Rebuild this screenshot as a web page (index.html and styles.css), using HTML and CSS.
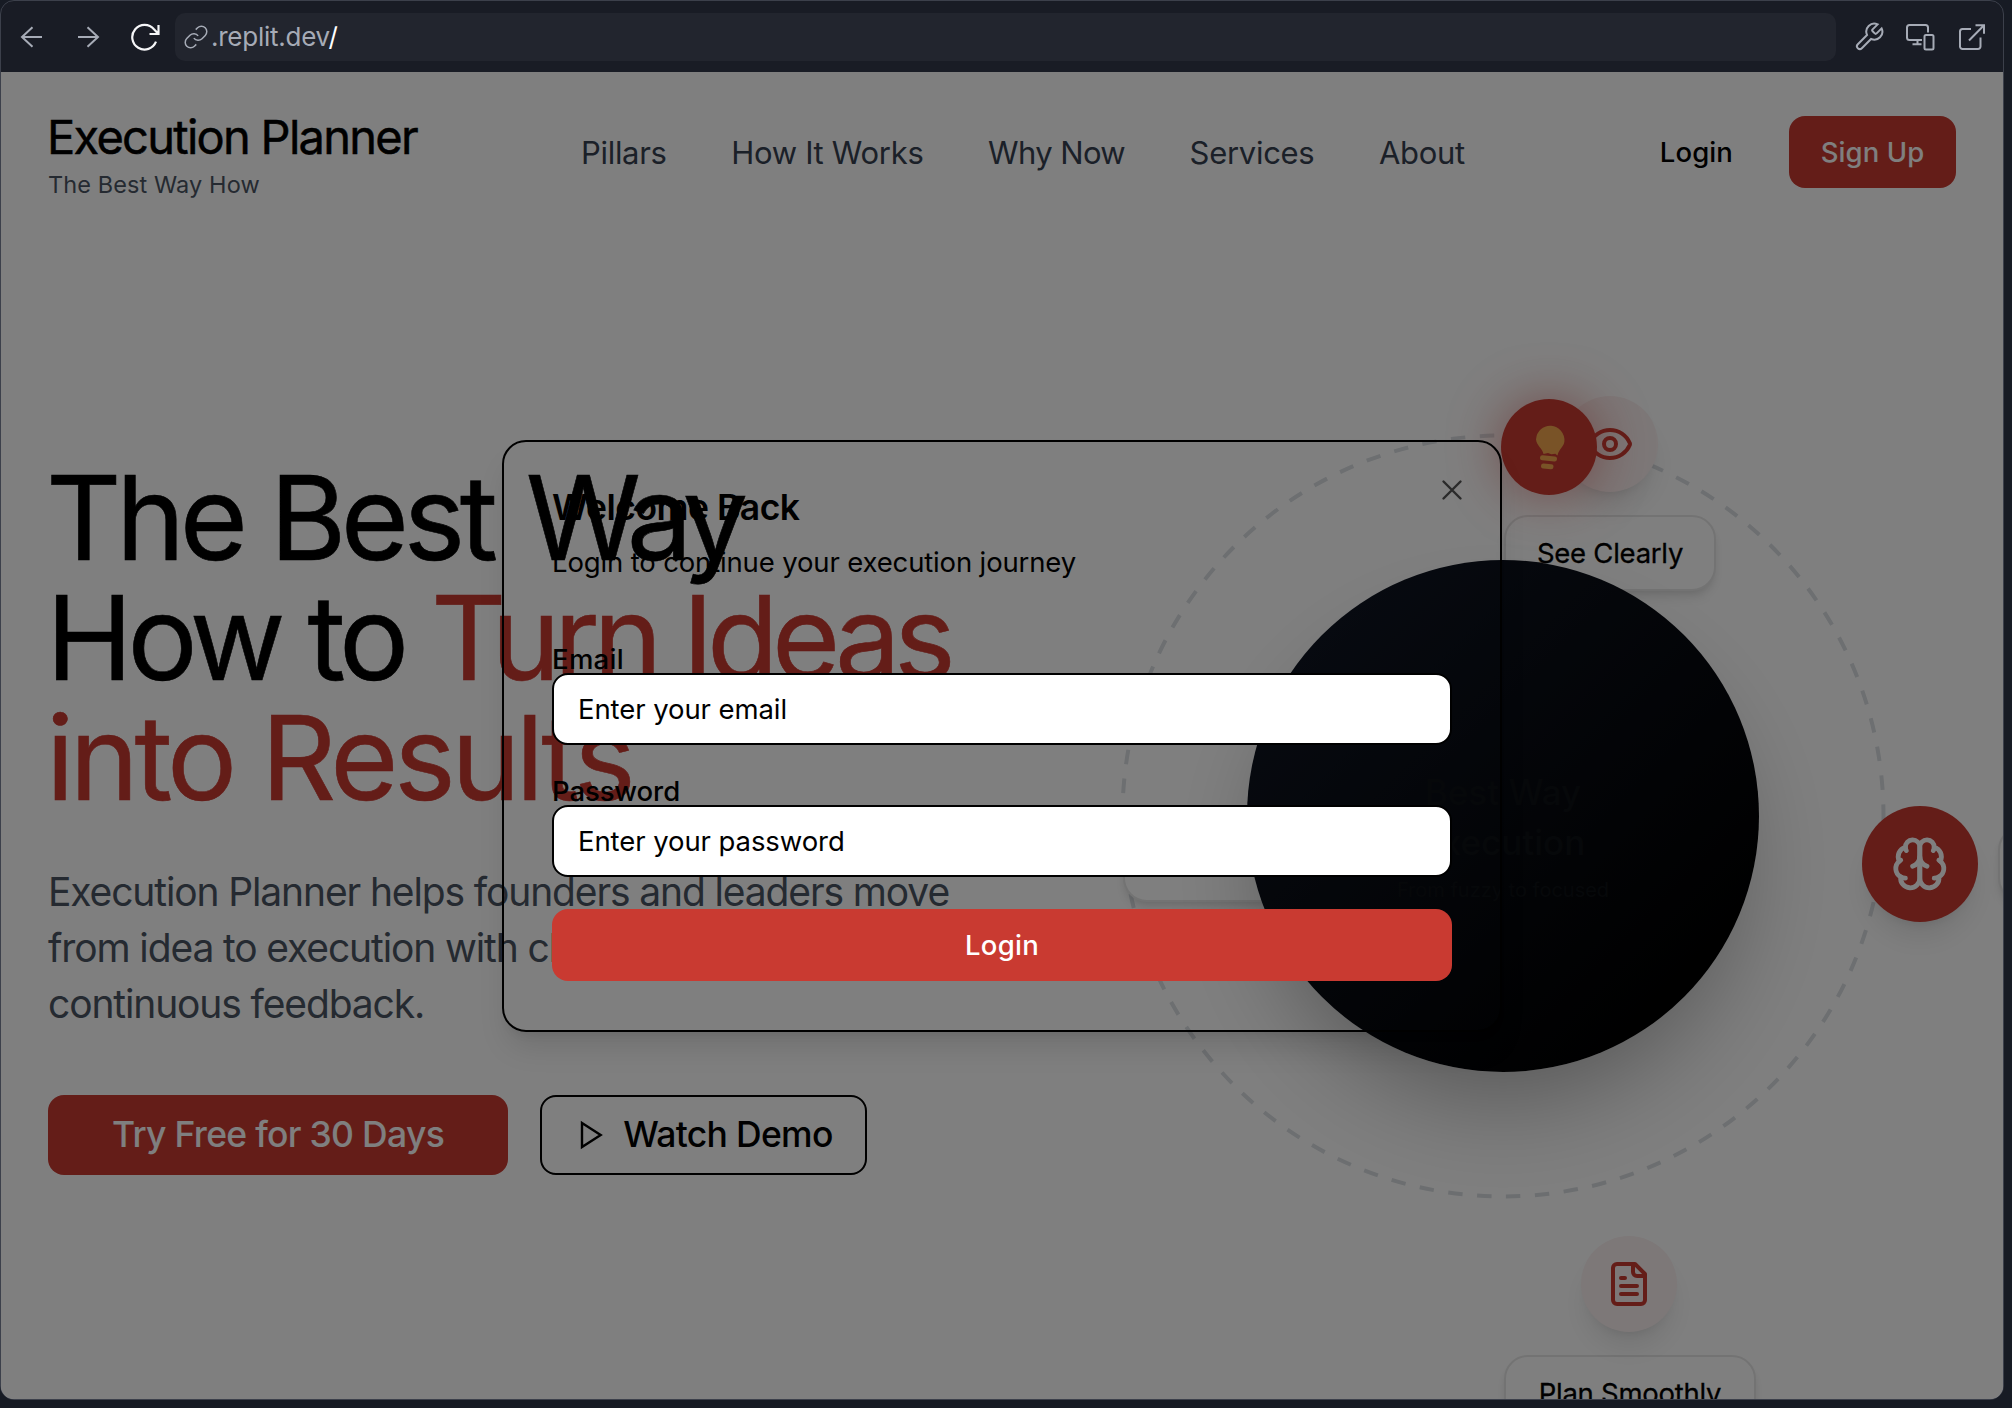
FILE: index.html
```html
<!DOCTYPE html>
<html lang="en">
<head>
<meta charset="utf-8">
<title>Execution Planner</title>
<link rel="stylesheet" href="styles.css">
</head>
<body>
<div class="frame">
  <div class="toolbar">
    <svg class="ic back" width="24" height="24" viewBox="0 0 24 24"><path d="M22 12H2M12.500 2.200 2 12l10.500 9.800"/></svg>
    <svg class="ic forward" width="24" height="24" viewBox="0 0 24 24"><path d="M2 12h20M11.500 2.200 22 12l-10.500 9.800"/></svg>
    <svg class="ic reload" width="30" height="28" viewBox="0 0 30 28"><path d="M28.500 2v9h-9M28.200 10.800 24 6.300A12.300 12.300 0 1 0 26 18.700"/></svg>
    <div class="url">
      <svg class="ic link" width="26" height="26" viewBox="0 0 24 24"><path d="M10 13a5 5 0 0 0 7.540.540l3-3a5 5 0 0 0-7.070-7.070l-1.720 1.710M14 11a5 5 0 0 0-7.540-.540l-3 3a5 5 0 0 0 7.070 7.070l1.710-1.710"/></svg>
      <span>.replit.dev<b>/</b></span>
    </div>
    <svg class="ic wrench" width="32" height="32" viewBox="0 0 24 24"><path d="M14.700 6.300a1 1 0 0 0 0 1.400l1.600 1.600a1 1 0 0 0 1.400 0l3.770-3.770a6 6 0 0 1-7.940 7.940l-6.910 6.910a2.120 2.120 0 0 1-3-3l6.910-6.910a6 6 0 0 1 7.940-7.940l-3.760 3.760z"/></svg>
    <svg class="ic devices" width="30" height="28" viewBox="0 0 30 28"><path d="M23 9.500V4.500a2.500 2.500 0 0 0-2.500-2.500H4.500A2.500 2.500 0 0 0 2 4.500v10A2.500 2.500 0 0 0 4.500 17H17M12.500 17v4M7.500 21.200h9"/><rect x="19.500" y="12" width="9" height="14.500" rx="1.500"/></svg>
    <svg class="ic external" width="28" height="28" viewBox="0 0 28 28"><path d="M13 6H4.500A2.500 2.500 0 0 0 2 8.500v15A2.500 2.500 0 0 0 4.500 26H20a2.500 2.500 0 0 0 2.500-2.500V14.500M17.500 2.200H26v8.500M26 2.200 11 17.500"/></svg>
  </div>

  <div class="page">
    <header class="header">
      <div class="brand">
        <div class="brand-name">Execution Planner</div>
        <div class="brand-tag">The Best Way How</div>
      </div>
      <nav class="nav">
        <a>Pillars</a><a>How It Works</a><a class="tight">Why Now</a><a>Services</a><a>About</a>
      </nav>
      <div class="account">
        <a class="login-link">Login</a>
        <a class="btn signup">Sign Up</a>
      </div>
    </header>

    <section class="hero">
      <h1>
        <span class="line l1">The Best <span class="way">Way</span></span>
        <span class="line l2">How to <em>Turn Ideas</em></span>
        <span class="line l3"><em>into Results</em></span>
      </h1>
      <p>Execution Planner helps founders and leaders move<br>from idea to execution with clarity, structure, and<br>continuous feedback.</p>
      <div class="actions">
        <a class="btn trial">Try Free for 30 Days</a>
        <a class="btn demo"><svg width="32" height="32" viewBox="0 0 24 24"><path d="M6 3l14 9-14 9z"/></svg>Watch Demo</a>
      </div>
    </section>

    <div class="orbit">
      <svg class="ring" width="768" height="768" viewBox="0 0 768 768"><circle cx="384" cy="384" r="380.500"/></svg>
      <div class="card see">See Clearly</div>
      <div class="card left"></div>
      <div class="card right"></div>
      <div class="card plan">Plan Smoothly</div>
      <div class="node eye"><svg width="48" height="48" viewBox="0 0 24 24"><path d="M2.062 12.348a1 1 0 0 1 0-.696 10.750 10.750 0 0 1 19.876 0 1 1 0 0 1 0 .696 10.750 10.750 0 0 1-19.876 0"/><circle cx="12" cy="12" r="3"/></svg></div>
      <div class="node doc"><svg width="48" height="48" viewBox="0 0 24 24"><path d="M15 2H6a2 2 0 0 0-2 2v16a2 2 0 0 0 2 2h12a2 2 0 0 0 2-2V7ZM14 2v4a2 2 0 0 0 2 2h4M10 9H8M16 13H8M16 17H8"/></svg></div>
      <div class="core">
        <div class="core-title">Best Way<br>Execution</div>
        <div class="core-sub">From fuzzy to focused</div>
      </div>
      <div class="node brain"><svg width="57.600" height="57.600" viewBox="0 0 24 24"><path d="M12 5a3 3 0 1 0-5.997.125 4 4 0 0 0-2.526 5.770 4 4 0 0 0 .556 6.588A4 4 0 1 0 12 18Z"/><path d="M12 5a3 3 0 1 1 5.997.125 4 4 0 0 1 2.526 5.770 4 4 0 0 1-.556 6.588A4 4 0 1 1 12 18Z"/><path d="M15 13a4.500 4.500 0 0 1-3-4 4.500 4.500 0 0 1-3 4M17.599 6.500a3 3 0 0 0 .399-1.375M6.003 5.125A3 3 0 0 0 6.401 6.500M3.477 10.896a4 4 0 0 1 .585-.396M19.938 10.500a4 4 0 0 1 .585.396M6 18a4 4 0 0 1-1.967-.516M19.967 17.484A4 4 0 0 1 18 18"/></svg></div>
      <div class="node bulb"><svg width="96" height="96" viewBox="0 0 96 96"><path d="M35 40.500a14.200 14.800 0 1 1 28.400 2c-.6 5.500-5.400 7-6.900 14l-2.200-1.700-4 .4-3.300-1.200-4.500 1.100C41.500 49.500 35.500 46.500 35 40.500Z"/><path class="band" d="M41.500 58.800l12 1.200M42.500 67l7.500.8"/></svg></div>
    </div>

    <div class="overlay"></div>

    <form class="modal">
      <svg class="close" width="24" height="24" viewBox="0 0 24 24"><path d="M3.500 3.500l17 17M20.500 3.500l-17 17"/></svg>
      <h2>Welcome Back</h2>
      <div class="modal-sub">Login to continue your execution journey</div>
      <label class="email">Email</label>
      <input type="text" placeholder="Enter your email">
      <label>Password</label>
      <input type="password" placeholder="Enter your password">
      <button type="button">Login</button>
    </form>
  </div>
</div>
</body>
</html>
```
FILE: styles.css
```css
* { box-sizing: border-box; }
body {
  margin: 0;
  width: 2012px;
  height: 1408px;
  overflow: hidden;
  background: #171b24;
  font-family: Inter, "Liberation Sans", sans-serif;
}
svg { display: block; flex: none; fill: none; stroke: currentColor; stroke-linecap: round; stroke-linejoin: round; }
.frame {
  width: 2004px;
  height: 1400px;
  border: 1px solid #3c404b;
  border-radius: 14px;
  overflow: hidden;
  background: #191c25;
}

/* browser toolbar */
.toolbar { height: 71px; display: flex; align-items: center; padding-left: 19px; color: #a6abb6; }
.ic { stroke-width: 2; stroke-linecap: butt; stroke-linejoin: miter; }
.forward { margin-left: 32px; }
.reload { margin-left: 30px; color: #f5f6f8; stroke-width: 2.200; }
.url {
  width: 1661px;
  height: 48px;
  margin-left: 15px;
  padding-left: 8px;
  border-radius: 10px;
  background: #22252e;
  display: flex;
  align-items: center;
  gap: 2px;
  font-size: 26px;
  letter-spacing: -.250px;
}
.url b { font-weight: 400; color: #fff; }
.link { stroke-width: 1.400; }
.wrench { margin-left: 17px; stroke-width: 1.500; }
.devices { margin-left: 20px; }
.external { margin-left: 23px; }

/* landing page */
.page { position: relative; height: 1327px; overflow: hidden; background: #fff; color: #000; }
.header { display: flex; align-items: center; padding: 32px 47px; height: 160px; }
.brand { width: 533px; height: 96px; padding-top: 5px; }
.brand-name { margin-left: -1px; font-size: 47px; line-height: 56px; font-weight: 400; letter-spacing: -1.720px; -webkit-text-stroke: .500px; white-space: nowrap; }
.brand-tag { margin-top: 4px; font-size: 23.500px; line-height: 32px; color: #4b5563; letter-spacing: .100px; }
.nav { display: flex; gap: 64.500px; font-size: 31px; color: #374151; letter-spacing: -.300px; }
.nav .tight { letter-spacing: -.600px; }
.account { margin-left: auto; display: flex; align-items: center; gap: 56px; font-size: 27.500px; font-weight: 500; letter-spacing: .100px; }
.btn { display: flex; align-items: center; justify-content: center; border-radius: 16px; font-weight: 500; }
.signup { width: 167px; height: 72px; background: #c93a31; color: #fff; }

.hero { padding: 226px 47px 0; }
h1 { margin: 0 0 0 -2px; font-size: 117px; line-height: 120px; font-weight: 400; -webkit-text-stroke: .600px; }
h1 em { font-style: normal; color: #c93a31; }
.line { display: block; white-space: nowrap; }
.l1 { letter-spacing: -5.530px; }
.way { margin-left: 6px; letter-spacing: -8.300px; }
.l2 { letter-spacing: -5.560px; }
.l2 em { letter-spacing: -6.550px; }
.l3 { letter-spacing: -4.510px; }
.hero p { margin: 46px 0 0; font-size: 39px; line-height: 56.200px; letter-spacing: -1.130px; color: #4b5563; white-space: nowrap; }
.actions { display: flex; gap: 32px; margin-top: 62px; font-size: 35.500px; letter-spacing: -.700px; }
.trial { width: 460px; height: 80px; background: #c93a31; color: #fff; }
.demo { width: 327px; height: 80px; border: 2px solid #000; gap: 17px; }
.demo svg { stroke-width: 1.800; stroke-linejoin: miter; }

/* orbit diagram */
.orbit { position: absolute; inset: 0; }
.orbit > * { position: absolute; }
.ring { left: 1117.500px; top: 359.500px; stroke: #dadee2; stroke-width: 4; stroke-linecap: butt; stroke-dasharray: 14.500 14.500; }
.core {
  left: 1246px;
  top: 488px;
  width: 512px;
  height: 512px;
  padding-top: 43px;
  border-radius: 50%;
  background: linear-gradient(135deg, #111827 0%, #000 85%);
  box-shadow: 0 50px 100px -24px rgba(0, 0, 0, .320);
  color: #0d1014;
  display: flex;
  flex-direction: column;
  align-items: center;
  justify-content: center;
  text-align: center;
}
.core-title { font-size: 35px; line-height: 50px; font-weight: 500; }
.core-sub { margin-top: 5px; font-size: 20px; line-height: 36px; }
.card {
  height: 76px;
  border: 2px solid #e7e7e7;
  border-radius: 24px;
  background: #fff;
  box-shadow: 0 8px 12px -2px rgba(0, 0, 0, .100), 0 4px 8px -4px rgba(0, 0, 0, .100);
  display: flex;
  align-items: center;
  justify-content: center;
  font-size: 27.500px;
  font-weight: 400;
  -webkit-text-stroke: .300px;
  letter-spacing: -.250px;
}
.see { left: 1503px; top: 443px; width: 212px; }
.left { left: 1122px; top: 754px; width: 220px; }
.right { left: 1997px; top: 754px; width: 220px; }
.plan { left: 1503px; top: 1283px; width: 252px; }
.node {
  width: 96px;
  height: 96px;
  border-radius: 50%;
  display: flex;
  align-items: center;
  justify-content: center;
  background: #faf0f0;
  color: #c93a31;
  box-shadow: 0 20px 30px -6px rgba(0, 0, 0, .100), 0 8px 12px -8px rgba(0, 0, 0, .100);
}
.node svg { stroke-width: 2; }
.eye { left: 1561px; top: 324px; }
.doc { left: 1580px; top: 1164px; }
.brain { left: 1860.500px; top: 734px; width: 116px; height: 116px; background: #c93a31; color: #fff; }
.bulb { left: 1499.500px; top: 327px; background: #c93a31; box-shadow: 0 0 50px rgba(201, 58, 49, .500), 0 0 90px rgba(201, 58, 49, .080); }
.bulb path { fill: #f2a64e; stroke: none; }
.bulb .band { fill: none; stroke: #f2a64e; stroke-width: 5; }
.overlay { position: absolute; inset: 0; background: rgba(0, 0, 0, .502); }

/* login dialog */
.modal {
  position: absolute;
  left: 501px;
  top: 368px;
  width: 1000px;
  height: 592px;
  padding: 48px;
  border: 2px solid #000;
  border-radius: 24px;
  box-shadow: 0 20px 30px -6px rgba(0, 0, 0, .120), 0 8px 12px -8px rgba(0, 0, 0, .100);
  display: flex;
  flex-direction: column;
}
.close { position: absolute; right: 36px; top: 36px; color: #2a2a2a; stroke-width: 2.400; }
.modal h2 { margin: 0; font-size: 35.500px; line-height: 36px; font-weight: 600; letter-spacing: -.500px; }
.modal-sub { margin: 16px 0 63px; font-size: 27.500px; line-height: 40px; letter-spacing: -.150px; }
.modal label { font-size: 27.500px; line-height: 28px; font-weight: 500; letter-spacing: -.100px; }
.modal label.email { letter-spacing: .300px; }
.modal input {
  height: 72px;
  margin: 0 0 32px;
  padding: 0 24px;
  border: 2px solid #000;
  border-radius: 16px;
  background: #fff;
  font: 400 27.500px Inter, "Liberation Sans", sans-serif;
  letter-spacing: -.080px;
  color: #000;
}
.modal input::placeholder { color: #000; opacity: 1; }
.modal button {
  height: 72px;
  border: 0;
  border-radius: 16px;
  background: #c93a31;
  color: #fff;
  font: 500 27.500px Inter, "Liberation Sans", sans-serif;
  letter-spacing: .300px;
}
```
